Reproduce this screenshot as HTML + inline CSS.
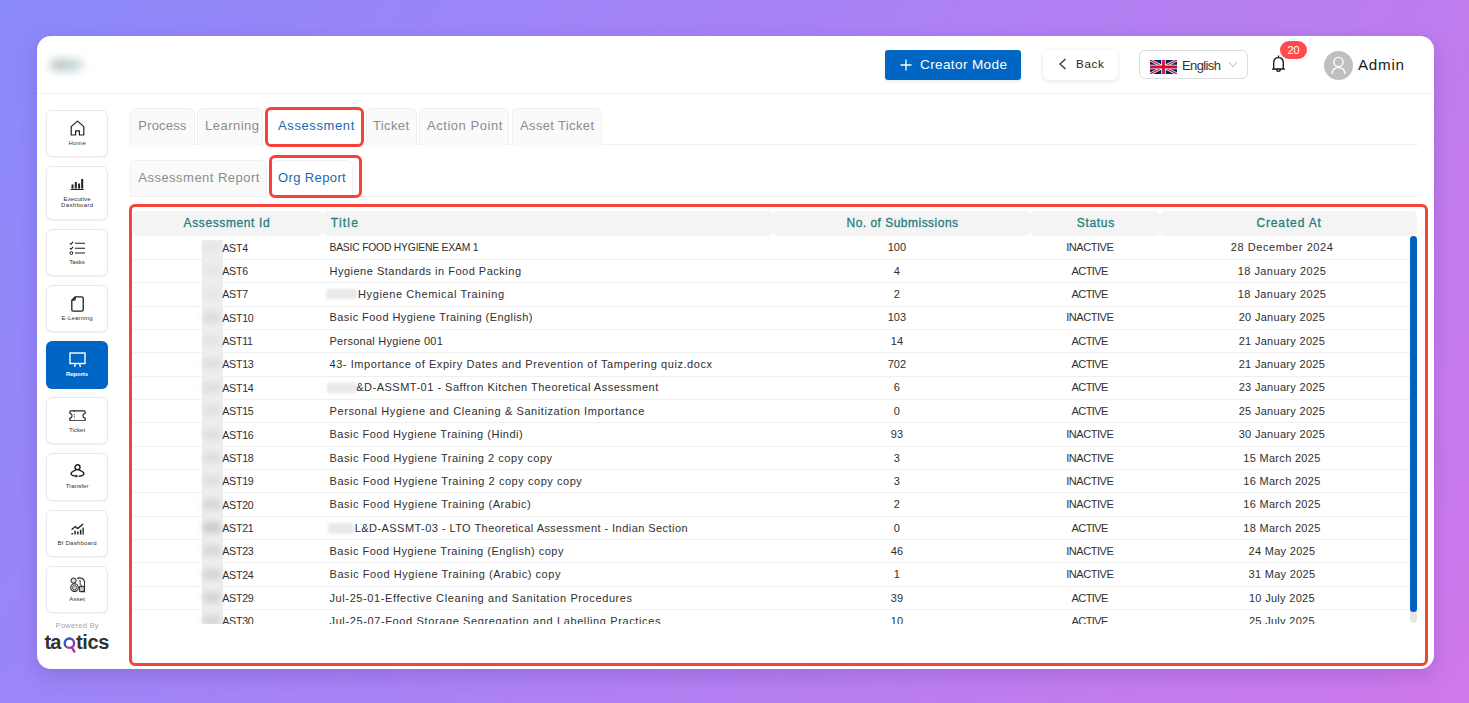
<!DOCTYPE html>
<html><head><meta charset="utf-8"><style>
html,body{margin:0;padding:0;}
body{width:1469px;height:703px;overflow:hidden;position:relative;font-family:"Liberation Sans", sans-serif;
background:linear-gradient(123deg,rgb(139,137,251) 0%,rgb(206,120,235) 100%);}
.t{position:absolute;white-space:nowrap;font-family:"Liberation Sans", sans-serif;}
</style></head><body>
<div style="position:absolute;left:37.00px;top:36.00px;width:1397.00px;height:633.00px;box-sizing:border-box;background:#fff;border-radius:14px;box-shadow:0 6px 18px rgba(60,20,120,0.18);"></div>
<div style="position:absolute;left:37.00px;top:93.00px;width:1397.00px;height:1.00px;box-sizing:border-box;background:#f0f0f0;"></div>
<div style="position:absolute;left:50.00px;top:58.50px;width:34.00px;height:12.00px;box-sizing:border-box;background:linear-gradient(90deg,#b9bfc3,#c0d1d1 60%,#d2e2e1);border-radius:35%;filter:blur(4px);"></div>
<div style="position:absolute;left:885.00px;top:50.00px;width:136.00px;height:29.50px;box-sizing:border-box;background:#0066c4;border-radius:3px;box-shadow:0 2px 3px rgba(0,0,0,0.08);"></div>
<svg style="position:absolute;left:900px;top:59px" width="12" height="12" viewBox="0 0 12 12"><path d="M6 0.5V11.5M0.5 6H11.5" stroke="#fff" stroke-width="1.3"/></svg>
<div class="t" style="left:920.00px;top:57.74px;font-size:13.60px;line-height:13.60px;color:#fff;letter-spacing:0.349px;">Creator Mode</div>
<div style="position:absolute;left:1043.00px;top:50.30px;width:75.00px;height:30.00px;box-sizing:border-box;background:#fff;border-radius:5px;box-shadow:0 1px 4px rgba(0,0,0,0.12);"></div>
<svg style="position:absolute;left:1058px;top:58px" width="10" height="12" viewBox="0 0 10 12"><path d="M7.5 1L2 6L7.5 11" stroke="#333" stroke-width="1.3" fill="none"/></svg>
<div class="t" style="left:1076.00px;top:58.34px;font-size:11.60px;line-height:11.60px;color:#222;letter-spacing:0.711px;">Back</div>
<div style="position:absolute;left:1139.00px;top:50.30px;width:109.00px;height:29.00px;box-sizing:border-box;background:#fff;border:1px solid #dcdcdc;border-radius:6px;"></div>
<svg style="position:absolute;left:1150px;top:60px" width="27" height="14" viewBox="0 0 60 30" preserveAspectRatio="none">
<rect width="60" height="30" fill="#012169"/>
<path d="M0,0 L60,30 M60,0 L0,30" stroke="#fff" stroke-width="6"/>
<path d="M0,0 L60,30 M60,0 L0,30" stroke="#C8102E" stroke-width="2.5"/>
<path d="M30,0 V30 M0,15 H60" stroke="#fff" stroke-width="10"/>
<path d="M30,0 V30 M0,15 H60" stroke="#C8102E" stroke-width="6"/>
</svg>
<div class="t" style="left:1182.00px;top:58.95px;font-size:13.00px;line-height:13.00px;color:#333;letter-spacing:-0.607px;">English</div>
<svg style="position:absolute;left:1228px;top:61px" width="10" height="7" viewBox="0 0 10 7"><path d="M1 1L5 6L9 1" stroke="#bbb" stroke-width="1" fill="none"/></svg>
<svg style="position:absolute;left:1271px;top:55px" width="15" height="19" viewBox="0 0 15 19"><path d="M7.5 0.4V2.4 M7.5 2.6C4.6 2.6 2.7 4.8 2.7 7.8V13.9H12.3V7.8C12.3 4.8 10.4 2.6 7.5 2.6Z M1 14.1H14 M5.6 14.4C5.8 17 9.2 17 9.4 14.4" stroke="#1a1a1a" stroke-width="1.35" fill="none" stroke-linejoin="round"/></svg>
<div style="position:absolute;left:1280.00px;top:41.00px;width:27.00px;height:18.00px;box-sizing:border-box;background:#ff4b4b;border-radius:9px;"></div>
<div class="t" style="left:1280.00px;width:27px;text-align:center;top:45.15px;font-size:11.00px;line-height:11.00px;color:#fff;">20</div>
<div style="position:absolute;left:1324.00px;top:50.50px;width:29.00px;height:29.00px;box-sizing:border-box;background:#bfbfbf;border-radius:50%;"></div>
<svg style="position:absolute;left:1324px;top:50.5px" width="29" height="29" viewBox="0 0 29 29"><circle cx="14.5" cy="11" r="4.6" stroke="#fff" stroke-width="1.4" fill="none"/><path d="M8 22.5C8.6 18.5 11 16.6 14.5 16.6C18 16.6 20.4 18.5 21 22.5" stroke="#fff" stroke-width="1.4" fill="none" stroke-linecap="round"/></svg>
<div class="t" style="left:1358.00px;top:56.58px;font-size:15.20px;line-height:15.20px;color:#1a1a1a;letter-spacing:0.727px;">Admin</div>
<div style="position:absolute;left:46.40px;top:109.50px;width:61.20px;height:47.50px;box-sizing:border-box;background:#fff;border:1px solid #e9e9e9;border-radius:6px;box-shadow:0 1px 2px rgba(0,0,0,0.06);"></div>
<svg style="position:absolute;left:69.5px;top:120px" width="15" height="16" viewBox="0 0 15 16"><path d="M1.2 6.6L7.5 1.1L13.8 6.6V15H9.4V10.8H5.6V15H1.2Z" stroke="#1f1f1f" stroke-width="1.2" fill="none" stroke-linejoin="round"/></svg>
<div class="t" style="left:47.33px;width:60px;text-align:center;top:139.90px;font-size:6.00px;line-height:6.00px;color:#333;letter-spacing:0.460px;">Home</div>
<div style="position:absolute;left:46.40px;top:165.50px;width:61.20px;height:54.50px;box-sizing:border-box;background:#fff;border:1px solid #e9e9e9;border-radius:6px;box-shadow:0 1px 2px rgba(0,0,0,0.06);"></div>
<svg style="position:absolute;left:70px;top:177.5px" width="14" height="12.5" viewBox="0 0 14 12.5"><path d="M1.5 6.5H3.5V10.5H1.5Z M4.8 4H6.8V10.5H4.8Z M8.1 5.5H10.1V10.5H8.1Z M11.2 1H13.2V10.5H11.2Z" fill="#1f1f1f"/><path d="M0.8 11.6H13.6" stroke="#1f1f1f" stroke-width="1.3"/></svg>
<div class="t" style="left:47.16px;width:60px;text-align:center;top:195.80px;font-size:6.00px;line-height:6.00px;color:#333;letter-spacing:0.124px;">Executive</div>
<div class="t" style="left:47.27px;width:60px;text-align:center;top:201.90px;font-size:6.00px;line-height:6.00px;color:#333;letter-spacing:0.333px;">Dashboard</div>
<div style="position:absolute;left:46.40px;top:228.50px;width:61.20px;height:47.50px;box-sizing:border-box;background:#fff;border:1px solid #e9e9e9;border-radius:6px;box-shadow:0 1px 2px rgba(0,0,0,0.06);"></div>
<svg style="position:absolute;left:69px;top:240.5px" width="17" height="14.5" viewBox="0 0 17 14.5"><path d="M0.9 2.2L2 3.3L4.1 0.9 M0.9 7.2L2 8.3L4.1 5.9" stroke="#1f1f1f" stroke-width="1.1" fill="none"/><circle cx="2.4" cy="12" r="1.4" stroke="#1f1f1f" stroke-width="1" fill="none"/><path d="M6 2.2H16 M6 7.2H16 M6 12H16" stroke="#1f1f1f" stroke-width="1.05"/></svg>
<div class="t" style="left:47.12px;width:60px;text-align:center;top:258.80px;font-size:6.00px;line-height:6.00px;color:#333;letter-spacing:0.042px;">Tasks</div>
<div style="position:absolute;left:46.40px;top:284.80px;width:61.20px;height:47.50px;box-sizing:border-box;background:#fff;border:1px solid #e9e9e9;border-radius:6px;box-shadow:0 1px 2px rgba(0,0,0,0.06);"></div>
<svg style="position:absolute;left:71px;top:295.5px" width="13" height="16" viewBox="0 0 13 16"><path d="M4.2 0.8H10.8C11.6 0.8 12.2 1.4 12.2 2.2V13.8C12.2 14.6 11.6 15.2 10.8 15.2H2.2C1.4 15.2 0.8 14.6 0.8 13.8V4.2Z M0.8 4.2H3C3.7 4.2 4.2 3.7 4.2 3V0.8" stroke="#1f1f1f" stroke-width="1.3" fill="none" stroke-linejoin="round"/></svg>
<div class="t" style="left:47.19px;width:60px;text-align:center;top:315.30px;font-size:6.00px;line-height:6.00px;color:#333;letter-spacing:0.184px;">E-Learning</div>
<div style="position:absolute;left:46.40px;top:341.20px;width:61.20px;height:47.50px;box-sizing:border-box;background:#0066c6;border-radius:6px;"></div>
<svg style="position:absolute;left:68.5px;top:351.5px" width="17" height="16" viewBox="0 0 17 16"><rect x="1" y="1" width="15" height="10.5" stroke="#fff" stroke-width="1.4" fill="none"/><path d="M6.4 11.5L5.6 15 M10.6 11.5L11.4 15" stroke="#fff" stroke-width="1.3"/></svg>
<div class="t" style="left:47.04px;width:60px;text-align:center;top:370.80px;font-size:6.00px;line-height:6.00px;color:#fff;font-weight:700;letter-spacing:-0.113px;">Reports</div>
<div style="position:absolute;left:46.40px;top:396.80px;width:61.20px;height:47.50px;box-sizing:border-box;background:#fff;border:1px solid #e9e9e9;border-radius:6px;box-shadow:0 1px 2px rgba(0,0,0,0.06);"></div>
<svg style="position:absolute;left:68.5px;top:409.5px" width="17" height="11.5" viewBox="0 0 17 11.5"><path d="M2 0.8H15C15.6 0.8 16.2 1.3 16.2 2V3.2C14.9 3.5 13.9 4.5 13.9 5.75C13.9 7 14.9 8 16.2 8.3V9.5C16.2 10.2 15.6 10.7 15 10.7H2C1.4 10.7 0.8 10.2 0.8 9.5V8.3C2.1 8 3.1 7 3.1 5.75C3.1 4.5 2.1 3.5 0.8 3.2V2C0.8 1.3 1.4 0.8 2 0.8Z" stroke="#1f1f1f" stroke-width="1.15" fill="none"/><path d="M5.3 1V1.8 M5.3 4.2V5.2 M5.3 6.4V7.4 M5.3 9.8V10.6" stroke="#1f1f1f" stroke-width="1"/></svg>
<div class="t" style="left:47.12px;width:60px;text-align:center;top:426.90px;font-size:6.00px;line-height:6.00px;color:#333;letter-spacing:0.044px;">Ticket</div>
<div style="position:absolute;left:46.40px;top:453.20px;width:61.20px;height:47.50px;box-sizing:border-box;background:#fff;border:1px solid #e9e9e9;border-radius:6px;box-shadow:0 1px 2px rgba(0,0,0,0.06);"></div>
<svg style="position:absolute;left:69.5px;top:464px" width="15" height="15" viewBox="0 0 15 15"><circle cx="7.5" cy="3.3" r="2.5" stroke="#1f1f1f" stroke-width="1.4" fill="none"/><path d="M5.7 6.1C3.6 6.9 1.1 8.1 1.1 9.7C1.1 11.2 3.4 11.9 6.4 12.1 M9.3 6.1C11.4 6.9 13.9 8.1 13.9 9.7C13.9 11.2 11.7 11.9 9.2 12.2" stroke="#1f1f1f" stroke-width="1.4" fill="none" stroke-linecap="round"/><path d="M5.6 10.5L8.2 12.1L5.7 13.8Z" fill="#1f1f1f"/></svg>
<div class="t" style="left:47.14px;width:60px;text-align:center;top:483.20px;font-size:6.00px;line-height:6.00px;color:#333;letter-spacing:0.084px;">Transfer</div>
<div style="position:absolute;left:46.40px;top:509.60px;width:61.20px;height:47.50px;box-sizing:border-box;background:#fff;border:1px solid #e9e9e9;border-radius:6px;box-shadow:0 1px 2px rgba(0,0,0,0.06);"></div>
<svg style="position:absolute;left:70.5px;top:522.5px" width="13" height="12" viewBox="0 0 13 12"><path d="M0.6 6.8L4.2 3.6L6.6 5.6L12.2 0.9" stroke="#1f1f1f" stroke-width="1.3" fill="none"/><path d="M0.5 10H2V11.6H0.5Z M3.3 7.8H4.8V11.6H3.3Z M6.1 8.6H7.6V11.6H6.1Z M8.9 6.7H10.4V11.6H8.9Z M11.5 4.4H12.8V11.6H11.5Z" fill="#1f1f1f"/></svg>
<div class="t" style="left:47.20px;width:60px;text-align:center;top:539.50px;font-size:6.00px;line-height:6.00px;color:#333;letter-spacing:0.210px;">BI Dashboard</div>
<div style="position:absolute;left:46.40px;top:565.80px;width:61.20px;height:47.50px;box-sizing:border-box;background:#fff;border:1px solid #e9e9e9;border-radius:6px;box-shadow:0 1px 2px rgba(0,0,0,0.06);"></div>
<svg style="position:absolute;left:69.5px;top:576.5px" width="15.5" height="16" viewBox="0 0 15.5 16"><circle cx="3.6" cy="3.6" r="2.6" stroke="#1f1f1f" stroke-width="1" fill="#ddd"/><circle cx="4.5" cy="10.6" r="3.8" stroke="#1f1f1f" stroke-width="1.1" fill="none"/><circle cx="4.5" cy="10.6" r="2.2" stroke="#1f1f1f" stroke-width="0.7" fill="#ccc"/><path d="M7 1.6C9.5 0.2 14.6 0.8 14.6 5.6V14.8H10.2" stroke="#1f1f1f" stroke-width="1.05" fill="none"/><rect x="9.6" y="9.4" width="4.6" height="5" stroke="#1f1f1f" stroke-width="0.9" fill="#ccc"/><path d="M10 2.8L10.2 7.6 M10.2 7.6L12 8.8" stroke="#1f1f1f" stroke-width="0.9" fill="none"/></svg>
<div class="t" style="left:47.16px;width:60px;text-align:center;top:595.90px;font-size:6.00px;line-height:6.00px;color:#333;letter-spacing:0.125px;">Asset</div>
<div class="t" style="left:37.21px;width:80px;text-align:center;top:622.14px;font-size:7.60px;line-height:7.60px;color:#a8a8a8;letter-spacing:0.226px;">Powered By</div>
<div class="t" style="left:44.50px;top:631.90px;font-size:20.00px;line-height:20.00px;color:#333;font-weight:700;letter-spacing:-0.900px;">ta</div>
<svg style="position:absolute;left:63.2px;top:637.2px" width="14" height="17" viewBox="0 0 14 17"><defs><linearGradient id="qg" x1="0" y1="0" x2="1" y2="1"><stop offset="0" stop-color="#1f57c9"/><stop offset="1" stop-color="#b0359a"/></linearGradient></defs><circle cx="6.4" cy="6.2" r="4.7" stroke="url(#qg)" stroke-width="2.4" fill="none"/><path d="M8.6 10.2L11.4 14.6" stroke="#a8369e" stroke-width="2.4" stroke-linecap="round"/></svg>
<div class="t" style="left:76.10px;top:631.90px;font-size:20.00px;line-height:20.00px;color:#333;font-weight:700;letter-spacing:-0.400px;">tics</div>
<div style="position:absolute;left:130.00px;top:144.00px;width:1287.50px;height:1.00px;box-sizing:border-box;background:#f0f0f0;"></div>
<div style="position:absolute;left:130.00px;top:108.00px;width:65.00px;height:36.50px;box-sizing:border-box;background:#fafafa;border:1px solid #f0f0f0;border-bottom:none;border-radius:6px 6px 0 0;"></div>
<div class="t" style="left:138.30px;top:118.95px;font-size:13.00px;line-height:13.00px;color:#8c8c8c;letter-spacing:0.178px;">Process</div>
<div style="position:absolute;left:197.00px;top:108.00px;width:66.00px;height:36.50px;box-sizing:border-box;background:#fafafa;border:1px solid #f0f0f0;border-bottom:none;border-radius:6px 6px 0 0;"></div>
<div class="t" style="left:205.00px;top:118.95px;font-size:13.00px;line-height:13.00px;color:#8c8c8c;letter-spacing:0.490px;">Learning</div>
<div style="position:absolute;left:267.00px;top:108.00px;width:95.00px;height:37.00px;box-sizing:border-box;background:#fff;border-radius:6px 6px 0 0;"></div>
<div class="t" style="left:278.00px;top:118.95px;font-size:13.00px;line-height:13.00px;color:#1d67b0;letter-spacing:0.613px;">Assessment</div>
<div style="position:absolute;left:366.00px;top:108.00px;width:50.50px;height:36.50px;box-sizing:border-box;background:#fafafa;border:1px solid #f0f0f0;border-bottom:none;border-radius:6px 6px 0 0;"></div>
<div class="t" style="left:373.00px;top:118.95px;font-size:13.00px;line-height:13.00px;color:#8c8c8c;letter-spacing:0.362px;">Ticket</div>
<div style="position:absolute;left:419.00px;top:108.00px;width:90.40px;height:36.50px;box-sizing:border-box;background:#fafafa;border:1px solid #f0f0f0;border-bottom:none;border-radius:6px 6px 0 0;"></div>
<div class="t" style="left:427.00px;top:118.95px;font-size:13.00px;line-height:13.00px;color:#8c8c8c;letter-spacing:0.540px;">Action Point</div>
<div style="position:absolute;left:512.30px;top:108.00px;width:89.70px;height:36.50px;box-sizing:border-box;background:#fafafa;border:1px solid #f0f0f0;border-bottom:none;border-radius:6px 6px 0 0;"></div>
<div class="t" style="left:520.00px;top:118.95px;font-size:13.00px;line-height:13.00px;color:#8c8c8c;letter-spacing:0.357px;">Asset Ticket</div>
<div style="position:absolute;left:130.00px;top:195.50px;width:1287.50px;height:1.00px;box-sizing:border-box;background:#f0f0f0;"></div>
<div style="position:absolute;left:130.00px;top:160.00px;width:137.00px;height:36.00px;box-sizing:border-box;background:#fafafa;border:1px solid #f0f0f0;border-bottom:none;border-radius:6px 6px 0 0;"></div>
<div class="t" style="left:138.30px;top:170.95px;font-size:13.00px;line-height:13.00px;color:#8c8c8c;letter-spacing:0.480px;">Assessment Report</div>
<div style="position:absolute;left:271.00px;top:160.00px;width:82.00px;height:36.50px;box-sizing:border-box;background:#fff;border:1px solid #f0f0f0;border-bottom:none;border-radius:6px 6px 0 0;"></div>
<div class="t" style="left:278.00px;top:170.95px;font-size:13.00px;line-height:13.00px;color:#1d67b0;letter-spacing:0.379px;">Org Report</div>
<div style="position:absolute;left:265.20px;top:107.20px;width:99.20px;height:40.30px;box-sizing:border-box;border:3px solid #f6433a;border-radius:6px;"></div>
<div style="position:absolute;left:268.80px;top:155.40px;width:93.20px;height:43.10px;box-sizing:border-box;border:3px solid #f6433a;border-radius:6px;"></div>
<div style="position:absolute;left:129.00px;top:203.60px;width:1299.00px;height:462.00px;box-sizing:border-box;border:3.2px solid #f6433a;border-radius:6px;"></div>
<div style="position:absolute;left:132.50px;top:211.00px;width:190.50px;height:24.60px;box-sizing:border-box;background:#f4f4f4;border-radius:5px;"></div>
<div style="position:absolute;left:323.00px;top:211.00px;width:450.00px;height:24.60px;box-sizing:border-box;background:#f4f4f4;border-radius:5px;"></div>
<div style="position:absolute;left:773.00px;top:211.00px;width:257.40px;height:24.60px;box-sizing:border-box;background:#f4f4f4;border-radius:5px;"></div>
<div style="position:absolute;left:1030.40px;top:211.00px;width:130.00px;height:24.60px;box-sizing:border-box;background:#f4f4f4;border-radius:5px;"></div>
<div style="position:absolute;left:1160.40px;top:211.00px;width:256.80px;height:24.60px;box-sizing:border-box;background:#f4f4f4;border-radius:5px;"></div>
<div class="t" style="left:76.90px;width:300px;text-align:center;top:217.20px;font-size:12.00px;line-height:12.00px;color:#1f7f81;letter-spacing:0.607px;-webkit-text-stroke:0.3px #1f7f81;">Assessment Id</div>
<div class="t" style="left:330.80px;top:217.20px;font-size:12.00px;line-height:12.00px;color:#1f7f81;letter-spacing:1.200px;-webkit-text-stroke:0.3px #1f7f81;">Title</div>
<div class="t" style="left:752.54px;width:300px;text-align:center;top:217.20px;font-size:12.00px;line-height:12.00px;color:#1f7f81;letter-spacing:0.478px;-webkit-text-stroke:0.3px #1f7f81;">No. of Submissions</div>
<div class="t" style="left:945.85px;width:300px;text-align:center;top:217.20px;font-size:12.00px;line-height:12.00px;color:#1f7f81;letter-spacing:0.696px;-webkit-text-stroke:0.3px #1f7f81;">Status</div>
<div class="t" style="left:1139.13px;width:300px;text-align:center;top:217.20px;font-size:12.00px;line-height:12.00px;color:#1f7f81;letter-spacing:0.867px;-webkit-text-stroke:0.3px #1f7f81;">Created At</div>
<div style="position:absolute;left:0;top:235.6px;width:1469px;height:388px;overflow:hidden;">
<div style="position:absolute;left:132.50px;top:23.24px;width:1277.00px;height:1.00px;box-sizing:border-box;background:#efefef;"></div>
<div style="position:absolute;left:132.50px;top:46.58px;width:1277.00px;height:1.00px;box-sizing:border-box;background:#efefef;"></div>
<div style="position:absolute;left:132.50px;top:69.92px;width:1277.00px;height:1.00px;box-sizing:border-box;background:#efefef;"></div>
<div style="position:absolute;left:132.50px;top:93.26px;width:1277.00px;height:1.00px;box-sizing:border-box;background:#efefef;"></div>
<div style="position:absolute;left:132.50px;top:116.60px;width:1277.00px;height:1.00px;box-sizing:border-box;background:#efefef;"></div>
<div style="position:absolute;left:132.50px;top:139.94px;width:1277.00px;height:1.00px;box-sizing:border-box;background:#efefef;"></div>
<div style="position:absolute;left:132.50px;top:163.28px;width:1277.00px;height:1.00px;box-sizing:border-box;background:#efefef;"></div>
<div style="position:absolute;left:132.50px;top:186.62px;width:1277.00px;height:1.00px;box-sizing:border-box;background:#efefef;"></div>
<div style="position:absolute;left:132.50px;top:209.96px;width:1277.00px;height:1.00px;box-sizing:border-box;background:#efefef;"></div>
<div style="position:absolute;left:132.50px;top:233.30px;width:1277.00px;height:1.00px;box-sizing:border-box;background:#efefef;"></div>
<div style="position:absolute;left:132.50px;top:256.64px;width:1277.00px;height:1.00px;box-sizing:border-box;background:#efefef;"></div>
<div style="position:absolute;left:132.50px;top:279.98px;width:1277.00px;height:1.00px;box-sizing:border-box;background:#efefef;"></div>
<div style="position:absolute;left:132.50px;top:303.32px;width:1277.00px;height:1.00px;box-sizing:border-box;background:#efefef;"></div>
<div style="position:absolute;left:132.50px;top:326.66px;width:1277.00px;height:1.00px;box-sizing:border-box;background:#efefef;"></div>
<div style="position:absolute;left:132.50px;top:350.00px;width:1277.00px;height:1.00px;box-sizing:border-box;background:#efefef;"></div>
<div style="position:absolute;left:132.50px;top:373.34px;width:1277.00px;height:1.00px;box-sizing:border-box;background:#efefef;"></div>
<div style="position:absolute;left:132.50px;top:396.68px;width:1277.00px;height:1.00px;box-sizing:border-box;background:#efefef;"></div>
<div style="position:absolute;left:201.60px;top:4.90px;width:21.20px;height:384.50px;box-sizing:border-box;background:#eeeeee;"></div>
<div style="position:absolute;left:203.00px;top:6.20px;width:18.00px;height:11.00px;box-sizing:border-box;background:#bcbcbc;filter:blur(3px);opacity:0.15;"></div>
<div class="t" style="left:222.30px;top:7.19px;font-size:10.60px;line-height:10.60px;color:#2f2f2f;letter-spacing:-0.25px;">AST4</div>
<div class="t" style="left:329.50px;top:7.45px;font-size:10.30px;line-height:10.30px;color:#2f2f2f;letter-spacing:-0.182px;">BASIC FOOD HYGIENE EXAM 1</div>
<div class="t" style="left:796.90px;width:200px;text-align:center;top:6.85px;font-size:11.00px;line-height:11.00px;color:#2f2f2f;">100</div>
<div class="t" style="left:989.78px;width:200px;text-align:center;top:6.85px;font-size:11.00px;line-height:11.00px;color:#2f2f2f;letter-spacing:-0.444px;">INACTIVE</div>
<div class="t" style="left:1132.08px;width:300px;text-align:center;top:6.85px;font-size:11.00px;line-height:11.00px;color:#2f2f2f;letter-spacing:0.563px;">28 December 2024</div>
<div style="position:absolute;left:203.00px;top:29.54px;width:18.00px;height:11.00px;box-sizing:border-box;background:#bcbcbc;filter:blur(3px);opacity:0.15;"></div>
<div class="t" style="left:222.30px;top:30.53px;font-size:10.60px;line-height:10.60px;color:#2f2f2f;letter-spacing:-0.25px;">AST6</div>
<div class="t" style="left:329.50px;top:30.19px;font-size:11.00px;line-height:11.00px;color:#2f2f2f;letter-spacing:0.500px;">Hygiene Standards in Food Packing</div>
<div class="t" style="left:796.90px;width:200px;text-align:center;top:30.19px;font-size:11.00px;line-height:11.00px;color:#2f2f2f;">4</div>
<div class="t" style="left:989.71px;width:200px;text-align:center;top:30.19px;font-size:11.00px;line-height:11.00px;color:#2f2f2f;letter-spacing:-0.582px;">ACTIVE</div>
<div class="t" style="left:1132.02px;width:300px;text-align:center;top:30.19px;font-size:11.00px;line-height:11.00px;color:#2f2f2f;letter-spacing:0.432px;">18 January 2025</div>
<div style="position:absolute;left:203.00px;top:52.88px;width:18.00px;height:11.00px;box-sizing:border-box;background:#bcbcbc;filter:blur(3px);opacity:0.15;"></div>
<div class="t" style="left:222.30px;top:53.87px;font-size:10.60px;line-height:10.60px;color:#2f2f2f;letter-spacing:-0.25px;">AST7</div>
<div style="position:absolute;left:326.00px;top:53.88px;width:31.00px;height:10.00px;box-sizing:border-box;background:#e9e9e9;filter:blur(1.5px);"></div>
<div class="t" style="left:358.00px;top:53.53px;font-size:11.00px;line-height:11.00px;color:#2f2f2f;letter-spacing:0.606px;">Hygiene Chemical Training</div>
<div class="t" style="left:796.90px;width:200px;text-align:center;top:53.53px;font-size:11.00px;line-height:11.00px;color:#2f2f2f;">2</div>
<div class="t" style="left:989.71px;width:200px;text-align:center;top:53.53px;font-size:11.00px;line-height:11.00px;color:#2f2f2f;letter-spacing:-0.582px;">ACTIVE</div>
<div class="t" style="left:1132.02px;width:300px;text-align:center;top:53.53px;font-size:11.00px;line-height:11.00px;color:#2f2f2f;letter-spacing:0.432px;">18 January 2025</div>
<div style="position:absolute;left:203.00px;top:76.22px;width:18.00px;height:11.00px;box-sizing:border-box;background:#bcbcbc;filter:blur(3px);opacity:0.35;"></div>
<div class="t" style="left:222.30px;top:77.21px;font-size:10.60px;line-height:10.60px;color:#2f2f2f;letter-spacing:-0.25px;">AST10</div>
<div class="t" style="left:329.50px;top:76.87px;font-size:11.00px;line-height:11.00px;color:#2f2f2f;letter-spacing:0.441px;">Basic Food Hygiene Training (English)</div>
<div class="t" style="left:796.90px;width:200px;text-align:center;top:76.87px;font-size:11.00px;line-height:11.00px;color:#2f2f2f;">103</div>
<div class="t" style="left:989.78px;width:200px;text-align:center;top:76.87px;font-size:11.00px;line-height:11.00px;color:#2f2f2f;letter-spacing:-0.444px;">INACTIVE</div>
<div class="t" style="left:1131.95px;width:300px;text-align:center;top:76.87px;font-size:11.00px;line-height:11.00px;color:#2f2f2f;letter-spacing:0.300px;">20 January 2025</div>
<div style="position:absolute;left:203.00px;top:99.56px;width:18.00px;height:11.00px;box-sizing:border-box;background:#bcbcbc;filter:blur(3px);opacity:0.20;"></div>
<div class="t" style="left:222.30px;top:100.55px;font-size:10.60px;line-height:10.60px;color:#2f2f2f;letter-spacing:-0.25px;">AST11</div>
<div class="t" style="left:329.50px;top:100.21px;font-size:11.00px;line-height:11.00px;color:#2f2f2f;letter-spacing:0.266px;">Personal Hygiene 001</div>
<div class="t" style="left:796.90px;width:200px;text-align:center;top:100.21px;font-size:11.00px;line-height:11.00px;color:#2f2f2f;">14</div>
<div class="t" style="left:989.71px;width:200px;text-align:center;top:100.21px;font-size:11.00px;line-height:11.00px;color:#2f2f2f;letter-spacing:-0.582px;">ACTIVE</div>
<div class="t" style="left:1131.95px;width:300px;text-align:center;top:100.21px;font-size:11.00px;line-height:11.00px;color:#2f2f2f;letter-spacing:0.300px;">21 January 2025</div>
<div style="position:absolute;left:203.00px;top:122.90px;width:18.00px;height:11.00px;box-sizing:border-box;background:#bcbcbc;filter:blur(3px);opacity:0.30;"></div>
<div class="t" style="left:222.30px;top:123.89px;font-size:10.60px;line-height:10.60px;color:#2f2f2f;letter-spacing:-0.25px;">AST13</div>
<div class="t" style="left:329.50px;top:123.55px;font-size:11.00px;line-height:11.00px;color:#2f2f2f;letter-spacing:0.565px;">43- Importance of Expiry Dates and Prevention of Tampering quiz.docx</div>
<div class="t" style="left:796.90px;width:200px;text-align:center;top:123.55px;font-size:11.00px;line-height:11.00px;color:#2f2f2f;">702</div>
<div class="t" style="left:989.71px;width:200px;text-align:center;top:123.55px;font-size:11.00px;line-height:11.00px;color:#2f2f2f;letter-spacing:-0.582px;">ACTIVE</div>
<div class="t" style="left:1131.95px;width:300px;text-align:center;top:123.55px;font-size:11.00px;line-height:11.00px;color:#2f2f2f;letter-spacing:0.300px;">21 January 2025</div>
<div style="position:absolute;left:203.00px;top:146.24px;width:18.00px;height:11.00px;box-sizing:border-box;background:#bcbcbc;filter:blur(3px);opacity:0.30;"></div>
<div class="t" style="left:222.30px;top:147.23px;font-size:10.60px;line-height:10.60px;color:#2f2f2f;letter-spacing:-0.25px;">AST14</div>
<div style="position:absolute;left:327.00px;top:147.24px;width:30.00px;height:10.00px;box-sizing:border-box;background:#e9e9e9;filter:blur(1.5px);"></div>
<div class="t" style="left:356.20px;top:146.89px;font-size:11.00px;line-height:11.00px;color:#2f2f2f;letter-spacing:0.501px;">&amp;D-ASSMT-01 - Saffron Kitchen Theoretical Assessment</div>
<div class="t" style="left:796.90px;width:200px;text-align:center;top:146.89px;font-size:11.00px;line-height:11.00px;color:#2f2f2f;">6</div>
<div class="t" style="left:989.71px;width:200px;text-align:center;top:146.89px;font-size:11.00px;line-height:11.00px;color:#2f2f2f;letter-spacing:-0.582px;">ACTIVE</div>
<div class="t" style="left:1131.95px;width:300px;text-align:center;top:146.89px;font-size:11.00px;line-height:11.00px;color:#2f2f2f;letter-spacing:0.300px;">23 January 2025</div>
<div style="position:absolute;left:203.00px;top:169.58px;width:18.00px;height:11.00px;box-sizing:border-box;background:#bcbcbc;filter:blur(3px);opacity:0.25;"></div>
<div class="t" style="left:222.30px;top:170.57px;font-size:10.60px;line-height:10.60px;color:#2f2f2f;letter-spacing:-0.25px;">AST15</div>
<div class="t" style="left:329.50px;top:170.23px;font-size:11.00px;line-height:11.00px;color:#2f2f2f;letter-spacing:0.588px;">Personal Hygiene and Cleaning &amp; Sanitization Importance</div>
<div class="t" style="left:796.90px;width:200px;text-align:center;top:170.23px;font-size:11.00px;line-height:11.00px;color:#2f2f2f;">0</div>
<div class="t" style="left:989.71px;width:200px;text-align:center;top:170.23px;font-size:11.00px;line-height:11.00px;color:#2f2f2f;letter-spacing:-0.582px;">ACTIVE</div>
<div class="t" style="left:1131.95px;width:300px;text-align:center;top:170.23px;font-size:11.00px;line-height:11.00px;color:#2f2f2f;letter-spacing:0.300px;">25 January 2025</div>
<div style="position:absolute;left:203.00px;top:192.92px;width:18.00px;height:11.00px;box-sizing:border-box;background:#bcbcbc;filter:blur(3px);opacity:0.30;"></div>
<div class="t" style="left:222.30px;top:193.91px;font-size:10.60px;line-height:10.60px;color:#2f2f2f;letter-spacing:-0.25px;">AST16</div>
<div class="t" style="left:329.50px;top:193.57px;font-size:11.00px;line-height:11.00px;color:#2f2f2f;letter-spacing:0.503px;">Basic Food Hygiene Training (Hindi)</div>
<div class="t" style="left:796.90px;width:200px;text-align:center;top:193.57px;font-size:11.00px;line-height:11.00px;color:#2f2f2f;">93</div>
<div class="t" style="left:989.78px;width:200px;text-align:center;top:193.57px;font-size:11.00px;line-height:11.00px;color:#2f2f2f;letter-spacing:-0.444px;">INACTIVE</div>
<div class="t" style="left:1131.95px;width:300px;text-align:center;top:193.57px;font-size:11.00px;line-height:11.00px;color:#2f2f2f;letter-spacing:0.300px;">30 January 2025</div>
<div style="position:absolute;left:203.00px;top:216.26px;width:18.00px;height:11.00px;box-sizing:border-box;background:#bcbcbc;filter:blur(3px);opacity:0.30;"></div>
<div class="t" style="left:222.30px;top:217.25px;font-size:10.60px;line-height:10.60px;color:#2f2f2f;letter-spacing:-0.25px;">AST18</div>
<div class="t" style="left:329.50px;top:216.91px;font-size:11.00px;line-height:11.00px;color:#2f2f2f;letter-spacing:0.532px;">Basic Food Hygiene Training 2 copy copy</div>
<div class="t" style="left:796.90px;width:200px;text-align:center;top:216.91px;font-size:11.00px;line-height:11.00px;color:#2f2f2f;">3</div>
<div class="t" style="left:989.78px;width:200px;text-align:center;top:216.91px;font-size:11.00px;line-height:11.00px;color:#2f2f2f;letter-spacing:-0.444px;">INACTIVE</div>
<div class="t" style="left:1131.95px;width:300px;text-align:center;top:216.91px;font-size:11.00px;line-height:11.00px;color:#2f2f2f;letter-spacing:0.300px;">15 March 2025</div>
<div style="position:absolute;left:203.00px;top:239.60px;width:18.00px;height:11.00px;box-sizing:border-box;background:#bcbcbc;filter:blur(3px);opacity:0.30;"></div>
<div class="t" style="left:222.30px;top:240.59px;font-size:10.60px;line-height:10.60px;color:#2f2f2f;letter-spacing:-0.25px;">AST19</div>
<div class="t" style="left:329.50px;top:240.25px;font-size:11.00px;line-height:11.00px;color:#2f2f2f;letter-spacing:0.551px;">Basic Food Hygiene Training 2 copy copy copy</div>
<div class="t" style="left:796.90px;width:200px;text-align:center;top:240.25px;font-size:11.00px;line-height:11.00px;color:#2f2f2f;">3</div>
<div class="t" style="left:989.78px;width:200px;text-align:center;top:240.25px;font-size:11.00px;line-height:11.00px;color:#2f2f2f;letter-spacing:-0.444px;">INACTIVE</div>
<div class="t" style="left:1131.95px;width:300px;text-align:center;top:240.25px;font-size:11.00px;line-height:11.00px;color:#2f2f2f;letter-spacing:0.300px;">16 March 2025</div>
<div style="position:absolute;left:203.00px;top:262.94px;width:18.00px;height:11.00px;box-sizing:border-box;background:#bcbcbc;filter:blur(3px);opacity:0.45;"></div>
<div class="t" style="left:222.30px;top:263.93px;font-size:10.60px;line-height:10.60px;color:#2f2f2f;letter-spacing:-0.25px;">AST20</div>
<div class="t" style="left:329.50px;top:263.59px;font-size:11.00px;line-height:11.00px;color:#2f2f2f;letter-spacing:0.545px;">Basic Food Hygiene Training (Arabic)</div>
<div class="t" style="left:796.90px;width:200px;text-align:center;top:263.59px;font-size:11.00px;line-height:11.00px;color:#2f2f2f;">2</div>
<div class="t" style="left:989.78px;width:200px;text-align:center;top:263.59px;font-size:11.00px;line-height:11.00px;color:#2f2f2f;letter-spacing:-0.444px;">INACTIVE</div>
<div class="t" style="left:1131.95px;width:300px;text-align:center;top:263.59px;font-size:11.00px;line-height:11.00px;color:#2f2f2f;letter-spacing:0.300px;">16 March 2025</div>
<div style="position:absolute;left:203.00px;top:286.28px;width:18.00px;height:11.00px;box-sizing:border-box;background:#bcbcbc;filter:blur(3px);opacity:0.70;"></div>
<div class="t" style="left:222.30px;top:287.27px;font-size:10.60px;line-height:10.60px;color:#2f2f2f;letter-spacing:-0.25px;">AST21</div>
<div style="position:absolute;left:328.00px;top:287.28px;width:26.00px;height:11.00px;box-sizing:border-box;background:#e9e9e9;filter:blur(1.5px);"></div>
<div class="t" style="left:354.70px;top:286.93px;font-size:11.00px;line-height:11.00px;color:#2f2f2f;letter-spacing:0.446px;">L&amp;D-ASSMT-03 - LTO Theoretical Assessment - Indian Section</div>
<div class="t" style="left:796.90px;width:200px;text-align:center;top:286.93px;font-size:11.00px;line-height:11.00px;color:#2f2f2f;">0</div>
<div class="t" style="left:989.71px;width:200px;text-align:center;top:286.93px;font-size:11.00px;line-height:11.00px;color:#2f2f2f;letter-spacing:-0.582px;">ACTIVE</div>
<div class="t" style="left:1131.95px;width:300px;text-align:center;top:286.93px;font-size:11.00px;line-height:11.00px;color:#2f2f2f;letter-spacing:0.300px;">18 March 2025</div>
<div style="position:absolute;left:203.00px;top:309.62px;width:18.00px;height:11.00px;box-sizing:border-box;background:#bcbcbc;filter:blur(3px);opacity:0.45;"></div>
<div class="t" style="left:222.30px;top:310.61px;font-size:10.60px;line-height:10.60px;color:#2f2f2f;letter-spacing:-0.25px;">AST23</div>
<div class="t" style="left:329.50px;top:310.27px;font-size:11.00px;line-height:11.00px;color:#2f2f2f;letter-spacing:0.502px;">Basic Food Hygiene Training (English) copy</div>
<div class="t" style="left:796.90px;width:200px;text-align:center;top:310.27px;font-size:11.00px;line-height:11.00px;color:#2f2f2f;">46</div>
<div class="t" style="left:989.78px;width:200px;text-align:center;top:310.27px;font-size:11.00px;line-height:11.00px;color:#2f2f2f;letter-spacing:-0.444px;">INACTIVE</div>
<div class="t" style="left:1131.95px;width:300px;text-align:center;top:310.27px;font-size:11.00px;line-height:11.00px;color:#2f2f2f;letter-spacing:0.300px;">24 May 2025</div>
<div style="position:absolute;left:203.00px;top:332.96px;width:18.00px;height:11.00px;box-sizing:border-box;background:#bcbcbc;filter:blur(3px);opacity:0.50;"></div>
<div class="t" style="left:222.30px;top:333.95px;font-size:10.60px;line-height:10.60px;color:#2f2f2f;letter-spacing:-0.25px;">AST24</div>
<div class="t" style="left:329.50px;top:333.61px;font-size:11.00px;line-height:11.00px;color:#2f2f2f;letter-spacing:0.562px;">Basic Food Hygiene Training (Arabic) copy</div>
<div class="t" style="left:796.90px;width:200px;text-align:center;top:333.61px;font-size:11.00px;line-height:11.00px;color:#2f2f2f;">1</div>
<div class="t" style="left:989.78px;width:200px;text-align:center;top:333.61px;font-size:11.00px;line-height:11.00px;color:#2f2f2f;letter-spacing:-0.444px;">INACTIVE</div>
<div class="t" style="left:1131.95px;width:300px;text-align:center;top:333.61px;font-size:11.00px;line-height:11.00px;color:#2f2f2f;letter-spacing:0.300px;">31 May 2025</div>
<div style="position:absolute;left:203.00px;top:356.30px;width:18.00px;height:11.00px;box-sizing:border-box;background:#bcbcbc;filter:blur(3px);opacity:0.50;"></div>
<div class="t" style="left:222.30px;top:357.29px;font-size:10.60px;line-height:10.60px;color:#2f2f2f;letter-spacing:-0.25px;">AST29</div>
<div class="t" style="left:329.50px;top:356.95px;font-size:11.00px;line-height:11.00px;color:#2f2f2f;letter-spacing:0.602px;">Jul-25-01-Effective Cleaning and Sanitation Procedures</div>
<div class="t" style="left:796.90px;width:200px;text-align:center;top:356.95px;font-size:11.00px;line-height:11.00px;color:#2f2f2f;">39</div>
<div class="t" style="left:989.71px;width:200px;text-align:center;top:356.95px;font-size:11.00px;line-height:11.00px;color:#2f2f2f;letter-spacing:-0.582px;">ACTIVE</div>
<div class="t" style="left:1131.95px;width:300px;text-align:center;top:356.95px;font-size:11.00px;line-height:11.00px;color:#2f2f2f;letter-spacing:0.300px;">10 July 2025</div>
<div style="position:absolute;left:203.00px;top:379.64px;width:18.00px;height:11.00px;box-sizing:border-box;background:#bcbcbc;filter:blur(3px);opacity:0.45;"></div>
<div class="t" style="left:222.30px;top:380.63px;font-size:10.60px;line-height:10.60px;color:#2f2f2f;letter-spacing:-0.25px;">AST30</div>
<div class="t" style="left:329.50px;top:380.29px;font-size:11.00px;line-height:11.00px;color:#2f2f2f;letter-spacing:0.625px;">Jul-25-07-Food Storage Segregation and Labelling Practices</div>
<div class="t" style="left:796.90px;width:200px;text-align:center;top:380.29px;font-size:11.00px;line-height:11.00px;color:#2f2f2f;">10</div>
<div class="t" style="left:989.71px;width:200px;text-align:center;top:380.29px;font-size:11.00px;line-height:11.00px;color:#2f2f2f;letter-spacing:-0.582px;">ACTIVE</div>
<div class="t" style="left:1131.95px;width:300px;text-align:center;top:380.29px;font-size:11.00px;line-height:11.00px;color:#2f2f2f;letter-spacing:0.300px;">25 July 2025</div>
</div>
<div style="position:absolute;left:1410.00px;top:235.80px;width:7.00px;height:387.00px;box-sizing:border-box;background:#e6e6e6;border-radius:3.5px;"></div>
<div style="position:absolute;left:1410.00px;top:235.80px;width:7.00px;height:376.60px;box-sizing:border-box;background:#0062bd;border-radius:3.5px;"></div>
</body></html>
